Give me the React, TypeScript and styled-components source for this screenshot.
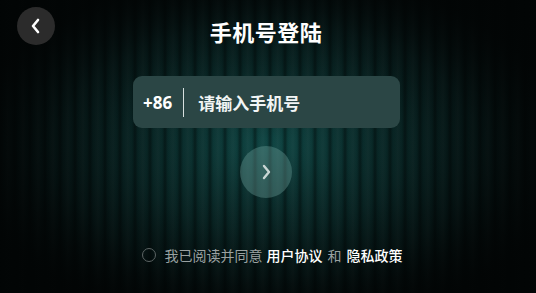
import React from 'react'
import styled, { createGlobalStyle } from 'styled-components'

const GlobalStyle = createGlobalStyle`
  html, body {
    margin: 0;
    padding: 0;
    background: #020505;
  }
  body {
    font-family: "Noto Sans CJK SC", "Noto Sans", sans-serif;
  }
`

const Screen = styled.div`
  position: relative;
  width: 536px;
  height: 293px;
  overflow: hidden;
  background:
    radial-gradient(ellipse 300px 180px at 268px 150px, rgba(2, 5, 5, 0) 0%, rgba(2, 5, 5, 0.5) 70%, rgba(2, 5, 5, 0.95) 100%),
    repeating-linear-gradient(90deg, rgba(0, 0, 0, 0.4) 0px, rgba(0, 0, 0, 0) 3px, rgba(255, 255, 255, 0.035) 8px, rgba(0, 0, 0, 0) 12px, rgba(0, 0, 0, 0.4) 15px),
    radial-gradient(ellipse 320px 200px at 268px 140px, #0f4644 0%, #0a2e2d 45%, #041212 80%, #020505 100%);
  display: flex;
  flex-direction: column;
  align-items: center;
`

const Header = styled.div`
  width: 100%;
  height: 52px;
  display: flex;
  align-items: center;
  justify-content: center;
  position: relative;
  padding-top: 10px;
  box-sizing: border-box;
`

const BackButton = styled.div`
  position: absolute;
  left: 17px;
  top: 7px;
  width: 38px;
  height: 38px;
  border-radius: 50%;
  background: #2b2b2b;
  display: flex;
  align-items: center;
  justify-content: center;
`

const Title = styled.div`
  color: #ffffff;
  font-size: 22px;
  font-weight: 700;
  letter-spacing: 0.5px;
  line-height: 1;
  margin-left: -4px;
`

const InputBox = styled.div`
  margin-top: 24px;
  margin-left: -3px;
  width: 267px;
  height: 52px;
  border-radius: 9px;
  background: #2b4645;
  display: flex;
  align-items: center;
  padding-left: 10px;
  box-sizing: border-box;
`

const Prefix = styled.span`
  color: #ffffff;
  font-family: "Noto Sans", sans-serif;
  font-size: 17px;
  font-weight: 700;
`

const Divider = styled.div`
  width: 1px;
  height: 29px;
  background: #d8e0df;
  margin: 0 14px 0 11px;
`

const Placeholder = styled.span`
  color: #f2f5f5;
  font-size: 17px;
  font-weight: 700;
`

const NextButton = styled.div`
  margin-top: 18px;
  margin-left: -4px;
  width: 52px;
  height: 52px;
  border-radius: 50%;
  background: rgba(110, 160, 156, 0.38);
  display: flex;
  align-items: center;
  justify-content: center;
`

const Agreement = styled.div`
  margin-top: 50px;
  margin-left: 8px;
  display: flex;
  align-items: center;
  font-size: 14px;
  line-height: 1;
  color: #9aa1a1;
`

const Radio = styled.span`
  width: 12px;
  height: 12px;
  border-radius: 50%;
  border: 1px solid #5c6464;
  margin-right: 9px;
`

const Link = styled.span`
  color: #ffffff;
  font-weight: 500;
  margin-left: ${(p: { $lead?: boolean }) => (p.$lead ? '4px' : '0')};
`

const Joiner = styled.span`
  margin: 0 5px;
`

const App = () => {
  return (
    <>
      <GlobalStyle />
      <Screen>
        <Header>
          <BackButton>
            <svg width="14" height="16" viewBox="0 0 14 16">
              <path d="M9 2 L4 8 L9 14" stroke="#ffffff" strokeWidth="2.6" fill="none" strokeLinecap="round" strokeLinejoin="round" />
            </svg>
          </BackButton>
          <Title>手机号登陆</Title>
        </Header>
        <InputBox>
          <Prefix>+86</Prefix>
          <Divider />
          <Placeholder>请输入手机号</Placeholder>
        </InputBox>
        <NextButton>
          <svg width="14" height="16" viewBox="0 0 14 16">
            <path d="M5 2 L10 8 L5 14" stroke="#c9d6d4" strokeWidth="2.4" fill="none" strokeLinecap="round" strokeLinejoin="round" />
          </svg>
        </NextButton>
        <Agreement>
          <Radio />
          我已阅读并同意
          <Link $lead>用户协议</Link>
          <Joiner>和</Joiner>
          <Link>隐私政策</Link>
        </Agreement>
      </Screen>
    </>
  )
}

export default App
